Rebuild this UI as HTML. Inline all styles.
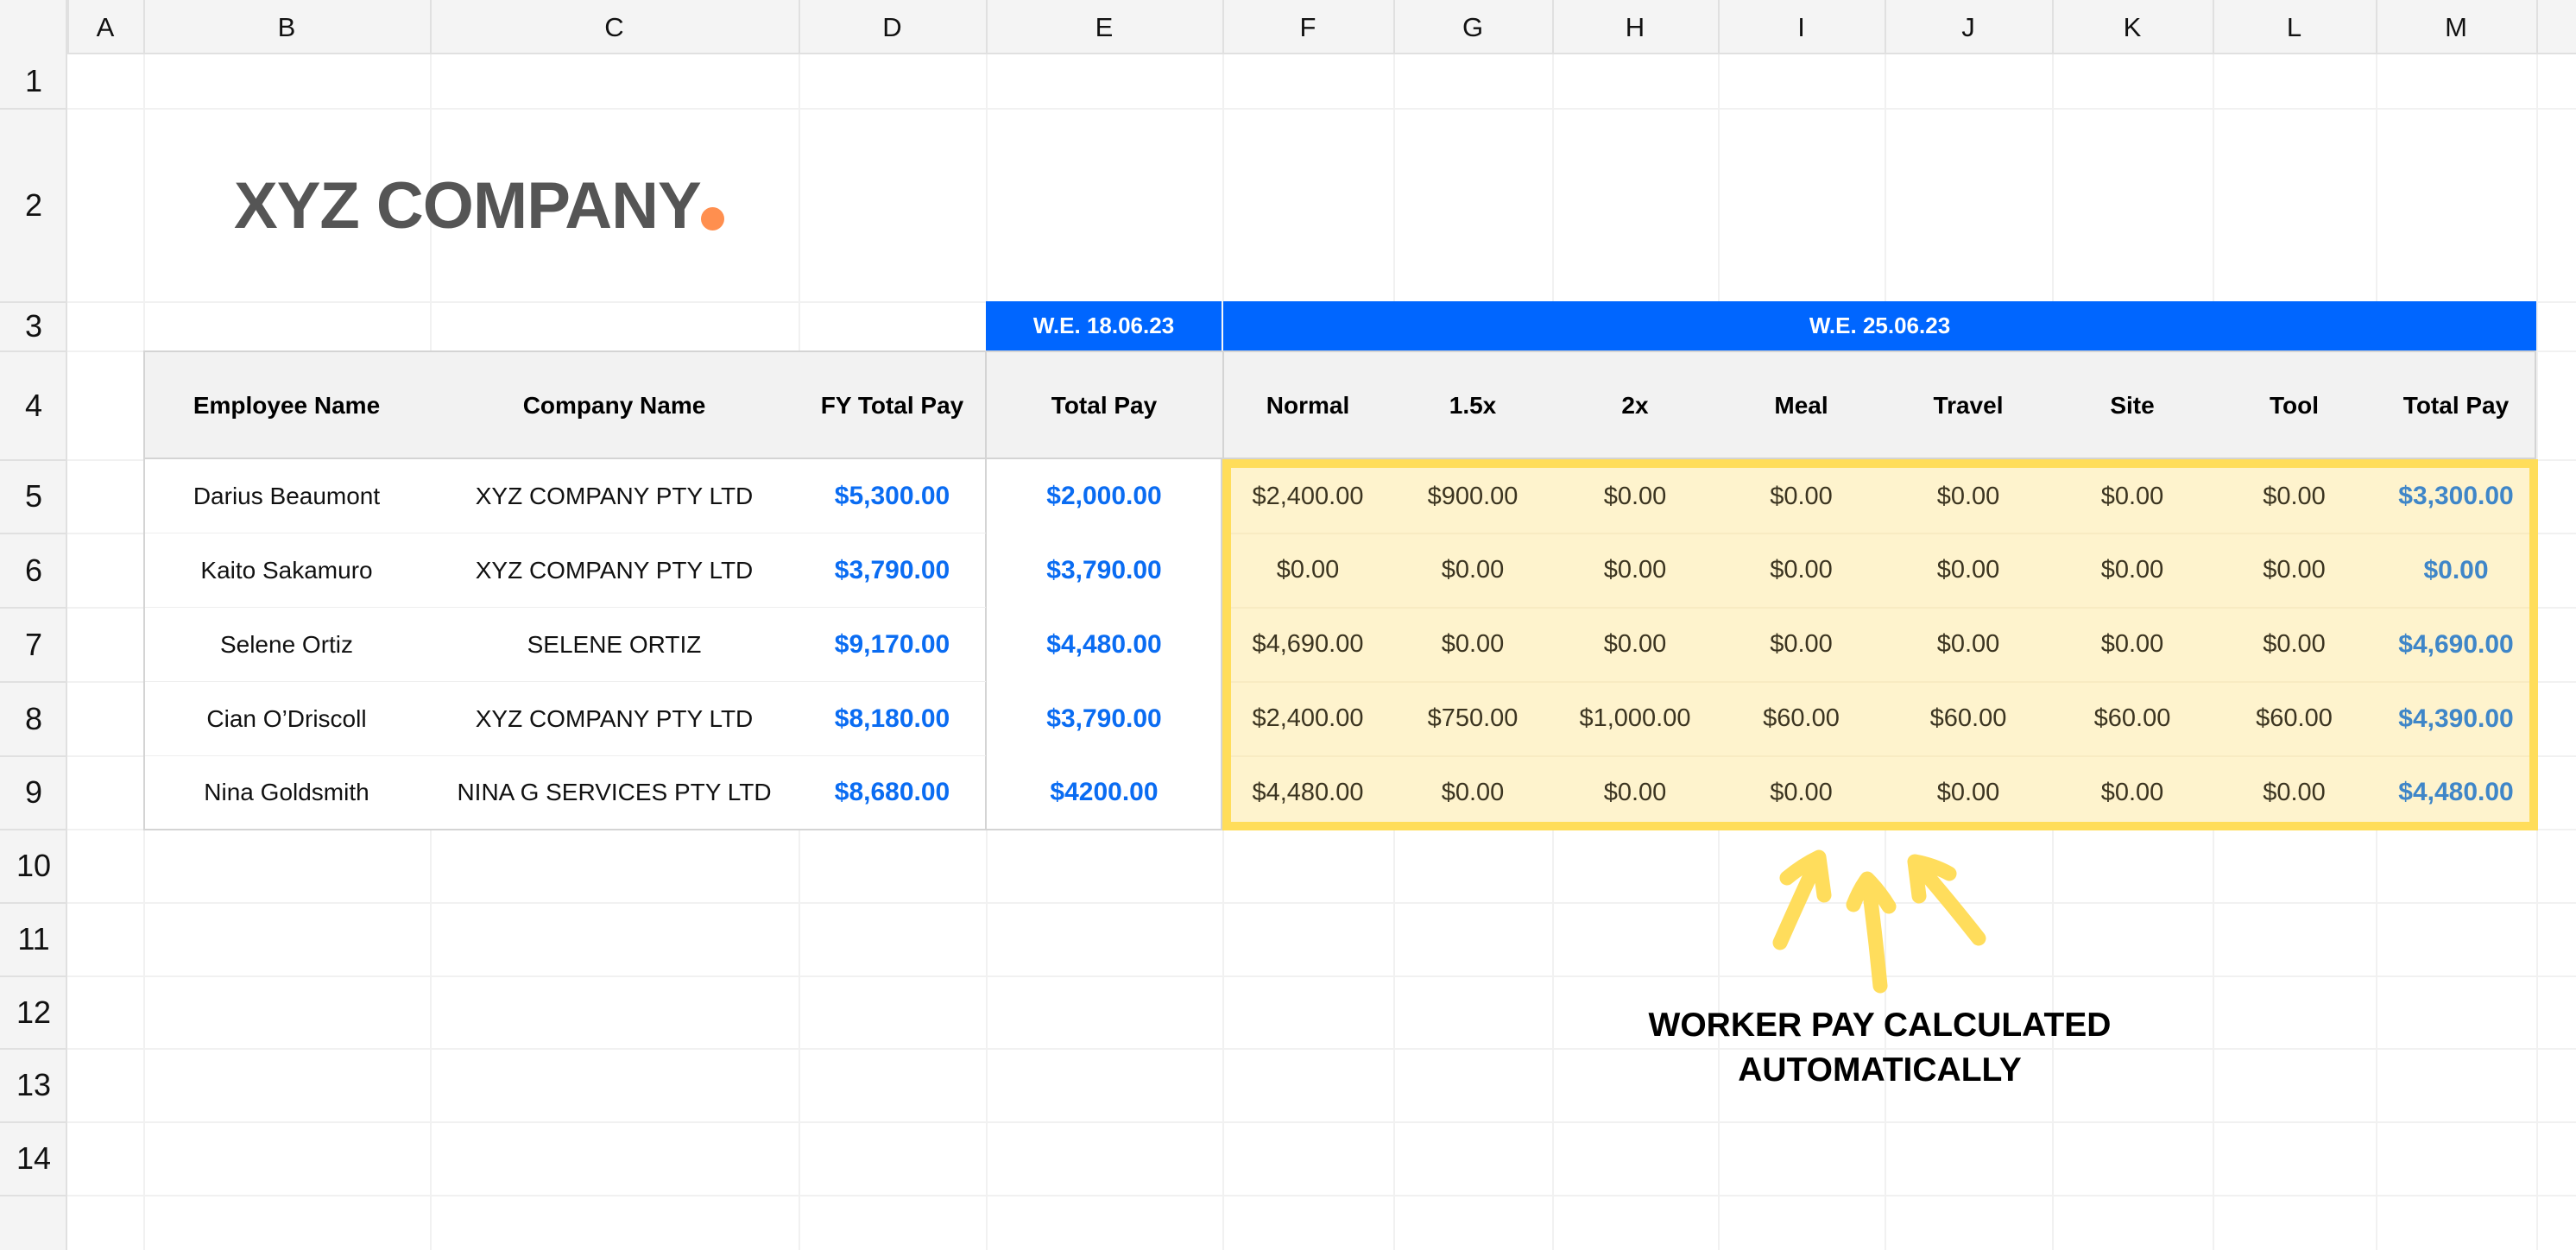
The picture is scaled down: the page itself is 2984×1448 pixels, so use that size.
<!DOCTYPE html>
<html><head><meta charset="utf-8"><style>
*{margin:0;padding:0;box-sizing:border-box}
body{width:2984px;height:1448px;background:#fff;position:relative;overflow:hidden;font-family:"Liberation Sans",sans-serif;color:#111}
.a{position:absolute}
.vl{position:absolute;top:0;height:1448px;width:2px;background:#f1f1f1}
.hl{position:absolute;left:0;width:2984px;height:2px;background:#f1f1f1}
.ch{position:absolute;top:0;height:63px;display:flex;align-items:center;justify-content:center;font-size:31px;color:#111}
.rh{position:absolute;left:0;width:78px;display:flex;align-items:center;justify-content:center;font-size:36px;color:#111}
.c{position:absolute;display:flex;align-items:center;justify-content:center;font-size:28px;white-space:nowrap}
.h{font-weight:bold;font-size:28px;color:#000}
.b{font-weight:bold;font-size:30px;color:#0a6cf2}
.y{color:#3b3420;font-size:29px}
.t{font-weight:bold;font-size:30px;color:#3f86c8}
</style></head><body>
<!-- header strips -->
<div class="a" style="left:0;top:0;width:2984px;height:63px;background:#f4f4f4;border-bottom:2px solid #e0e0e0"></div>
<div class="a" style="left:0;top:0;width:78px;height:1448px;background:#f4f4f4;border-right:2px solid #e0e0e0"></div>
<!-- grid lines -->
<div class="vl" style="left:166px"></div><div class="vl" style="left:498px"></div><div class="vl" style="left:925px"></div><div class="vl" style="left:1142px"></div><div class="vl" style="left:1416px"></div><div class="vl" style="left:1614px"></div><div class="vl" style="left:1798px"></div><div class="vl" style="left:1990px"></div><div class="vl" style="left:2183px"></div><div class="vl" style="left:2377px"></div><div class="vl" style="left:2563px"></div><div class="vl" style="left:2752px"></div><div class="vl" style="left:2938px"></div>
<div class="hl" style="top:125px"></div><div class="hl" style="top:349px"></div><div class="hl" style="top:406px"></div><div class="hl" style="top:532px"></div><div class="hl" style="top:617px"></div><div class="hl" style="top:703px"></div><div class="hl" style="top:789px"></div><div class="hl" style="top:875px"></div><div class="hl" style="top:960px"></div><div class="hl" style="top:1045px"></div><div class="hl" style="top:1130px"></div><div class="hl" style="top:1214px"></div><div class="hl" style="top:1299px"></div><div class="hl" style="top:1384px"></div>
<!-- row header separators -->
<div class="a" style="left:0;top:125px;width:78px;height:2px;background:#e0e0e0"></div><div class="a" style="left:0;top:349px;width:78px;height:2px;background:#e0e0e0"></div><div class="a" style="left:0;top:406px;width:78px;height:2px;background:#e0e0e0"></div><div class="a" style="left:0;top:532px;width:78px;height:2px;background:#e0e0e0"></div><div class="a" style="left:0;top:617px;width:78px;height:2px;background:#e0e0e0"></div><div class="a" style="left:0;top:703px;width:78px;height:2px;background:#e0e0e0"></div><div class="a" style="left:0;top:789px;width:78px;height:2px;background:#e0e0e0"></div><div class="a" style="left:0;top:875px;width:78px;height:2px;background:#e0e0e0"></div><div class="a" style="left:0;top:960px;width:78px;height:2px;background:#e0e0e0"></div><div class="a" style="left:0;top:1045px;width:78px;height:2px;background:#e0e0e0"></div><div class="a" style="left:0;top:1130px;width:78px;height:2px;background:#e0e0e0"></div><div class="a" style="left:0;top:1214px;width:78px;height:2px;background:#e0e0e0"></div><div class="a" style="left:0;top:1299px;width:78px;height:2px;background:#e0e0e0"></div><div class="a" style="left:0;top:1384px;width:78px;height:2px;background:#e0e0e0"></div>
<!-- column header separators -->
<div class="a" style="top:0;height:63px;left:78px;width:2px;background:#e0e0e0"></div><div class="a" style="top:0;height:63px;left:166px;width:2px;background:#e0e0e0"></div><div class="a" style="top:0;height:63px;left:498px;width:2px;background:#e0e0e0"></div><div class="a" style="top:0;height:63px;left:925px;width:2px;background:#e0e0e0"></div><div class="a" style="top:0;height:63px;left:1142px;width:2px;background:#e0e0e0"></div><div class="a" style="top:0;height:63px;left:1416px;width:2px;background:#e0e0e0"></div><div class="a" style="top:0;height:63px;left:1614px;width:2px;background:#e0e0e0"></div><div class="a" style="top:0;height:63px;left:1798px;width:2px;background:#e0e0e0"></div><div class="a" style="top:0;height:63px;left:1990px;width:2px;background:#e0e0e0"></div><div class="a" style="top:0;height:63px;left:2183px;width:2px;background:#e0e0e0"></div><div class="a" style="top:0;height:63px;left:2377px;width:2px;background:#e0e0e0"></div><div class="a" style="top:0;height:63px;left:2563px;width:2px;background:#e0e0e0"></div><div class="a" style="top:0;height:63px;left:2752px;width:2px;background:#e0e0e0"></div><div class="a" style="top:0;height:63px;left:2938px;width:2px;background:#e0e0e0"></div>
<!-- column letters -->
<div class="ch" style="left:78px;width:88px">A</div><div class="ch" style="left:166px;width:332px">B</div><div class="ch" style="left:498px;width:427px">C</div><div class="ch" style="left:925px;width:217px">D</div><div class="ch" style="left:1142px;width:274px">E</div><div class="ch" style="left:1416px;width:198px">F</div><div class="ch" style="left:1614px;width:184px">G</div><div class="ch" style="left:1798px;width:192px">H</div><div class="ch" style="left:1990px;width:193px">I</div><div class="ch" style="left:2183px;width:194px">J</div><div class="ch" style="left:2377px;width:186px">K</div><div class="ch" style="left:2563px;width:189px">L</div><div class="ch" style="left:2752px;width:186px">M</div>
<!-- row numbers -->
<div class="rh" style="top:63px;height:62px">1</div><div class="rh" style="top:126px;height:223px">2</div><div class="rh" style="top:350px;height:56px">3</div><div class="rh" style="top:407px;height:125px">4</div><div class="rh" style="top:533px;height:84px">5</div><div class="rh" style="top:618px;height:85px">6</div><div class="rh" style="top:704px;height:85px">7</div><div class="rh" style="top:790px;height:85px">8</div><div class="rh" style="top:876px;height:84px">9</div><div class="rh" style="top:961px;height:84px">10</div><div class="rh" style="top:1046px;height:84px">11</div><div class="rh" style="top:1131px;height:83px">12</div><div class="rh" style="top:1215px;height:84px">13</div><div class="rh" style="top:1300px;height:84px">14</div>
<!-- logo -->
<div class="a" style="left:271px;top:196px;font-size:76px;font-weight:900;color:#555;letter-spacing:-1px;line-height:86px;white-space:nowrap">XYZ COMPANY</div>
<div class="a" style="left:812px;top:240px;width:27px;height:27px;border-radius:50%;background:#ff8f4f"></div>
<!-- blue headers -->
<div class="c" style="left:1142px;top:349px;width:273px;height:57px;background:#0066ff;color:#fff;font-weight:bold;font-size:26px">W.E. 18.06.23</div>
<div class="c" style="left:1417px;top:349px;width:1521px;height:57px;background:#0066ff;color:#fff;font-weight:bold;font-size:26px">W.E. 25.06.23</div>
<!-- table body bg -->
<div class="a" style="left:166px;top:406px;width:2772px;height:126px;background:#f2f2f2;border:2px solid #d4d4d4"></div>
<div class="a" style="left:166px;top:532px;width:1250px;height:430px;background:#fff;border:2px solid #d4d4d4;border-top:none"></div>
<div class="a" style="left:1141px;top:406px;width:2px;height:556px;background:#d4d4d4"></div>
<div class="a" style="left:1416px;top:406px;width:2px;height:126px;background:#d4d4d4"></div>
<div class="a" style="left:168px;top:617px;width:974px;height:1px;background:#eee"></div><div class="a" style="left:168px;top:703px;width:974px;height:1px;background:#eee"></div><div class="a" style="left:168px;top:789px;width:974px;height:1px;background:#eee"></div><div class="a" style="left:168px;top:875px;width:974px;height:1px;background:#eee"></div>
<div class="a" style="left:1416px;top:532px;width:1524px;height:430px;background:#fef3cd;border:10px solid #ffdd5a"></div>
<div class="a" style="left:1426px;top:617px;width:1504px;height:2px;background:#f8ebc2"></div><div class="a" style="left:1426px;top:703px;width:1504px;height:2px;background:#f8ebc2"></div><div class="a" style="left:1426px;top:789px;width:1504px;height:2px;background:#f8ebc2"></div><div class="a" style="left:1426px;top:875px;width:1504px;height:2px;background:#f8ebc2"></div>
<!-- header row texts -->
<div class="c h" style="left:166px;top:407px;width:332px;height:125px">Employee Name</div>
<div class="c h" style="left:498px;top:407px;width:427px;height:125px">Company Name</div>
<div class="c h" style="left:925px;top:407px;width:217px;height:125px">FY Total Pay</div>
<div class="c h" style="left:1142px;top:407px;width:274px;height:125px">Total Pay</div>
<div class="c h" style="left:1416px;top:407px;width:198px;height:125px">Normal</div>
<div class="c h" style="left:1614px;top:407px;width:184px;height:125px">1.5x</div>
<div class="c h" style="left:1798px;top:407px;width:192px;height:125px">2x</div>
<div class="c h" style="left:1990px;top:407px;width:193px;height:125px">Meal</div>
<div class="c h" style="left:2183px;top:407px;width:194px;height:125px">Travel</div>
<div class="c h" style="left:2377px;top:407px;width:186px;height:125px">Site</div>
<div class="c h" style="left:2563px;top:407px;width:189px;height:125px">Tool</div>
<div class="c h" style="left:2752px;top:407px;width:186px;height:125px">Total Pay</div>
<!-- row 5 -->
<div class="c" style="left:166px;top:533px;width:332px;height:84px">Darius Beaumont</div>
<div class="c" style="left:498px;top:533px;width:427px;height:84px">XYZ COMPANY PTY LTD</div>
<div class="c b" style="left:925px;top:533px;width:217px;height:84px">$5,300.00</div>
<div class="c b" style="left:1142px;top:533px;width:274px;height:84px">$2,000.00</div>
<div class="c y" style="left:1416px;top:533px;width:198px;height:84px">$2,400.00</div>
<div class="c y" style="left:1614px;top:533px;width:184px;height:84px">$900.00</div>
<div class="c y" style="left:1798px;top:533px;width:192px;height:84px">$0.00</div>
<div class="c y" style="left:1990px;top:533px;width:193px;height:84px">$0.00</div>
<div class="c y" style="left:2183px;top:533px;width:194px;height:84px">$0.00</div>
<div class="c y" style="left:2377px;top:533px;width:186px;height:84px">$0.00</div>
<div class="c y" style="left:2563px;top:533px;width:189px;height:84px">$0.00</div>
<div class="c t" style="left:2752px;top:533px;width:186px;height:84px">$3,300.00</div>
<!-- row 6 -->
<div class="c" style="left:166px;top:618px;width:332px;height:85px">Kaito Sakamuro</div>
<div class="c" style="left:498px;top:618px;width:427px;height:85px">XYZ COMPANY PTY LTD</div>
<div class="c b" style="left:925px;top:618px;width:217px;height:85px">$3,790.00</div>
<div class="c b" style="left:1142px;top:618px;width:274px;height:85px">$3,790.00</div>
<div class="c y" style="left:1416px;top:618px;width:198px;height:85px">$0.00</div>
<div class="c y" style="left:1614px;top:618px;width:184px;height:85px">$0.00</div>
<div class="c y" style="left:1798px;top:618px;width:192px;height:85px">$0.00</div>
<div class="c y" style="left:1990px;top:618px;width:193px;height:85px">$0.00</div>
<div class="c y" style="left:2183px;top:618px;width:194px;height:85px">$0.00</div>
<div class="c y" style="left:2377px;top:618px;width:186px;height:85px">$0.00</div>
<div class="c y" style="left:2563px;top:618px;width:189px;height:85px">$0.00</div>
<div class="c t" style="left:2752px;top:618px;width:186px;height:85px">$0.00</div>
<!-- row 7 -->
<div class="c" style="left:166px;top:704px;width:332px;height:85px">Selene Ortiz</div>
<div class="c" style="left:498px;top:704px;width:427px;height:85px">SELENE ORTIZ</div>
<div class="c b" style="left:925px;top:704px;width:217px;height:85px">$9,170.00</div>
<div class="c b" style="left:1142px;top:704px;width:274px;height:85px">$4,480.00</div>
<div class="c y" style="left:1416px;top:704px;width:198px;height:85px">$4,690.00</div>
<div class="c y" style="left:1614px;top:704px;width:184px;height:85px">$0.00</div>
<div class="c y" style="left:1798px;top:704px;width:192px;height:85px">$0.00</div>
<div class="c y" style="left:1990px;top:704px;width:193px;height:85px">$0.00</div>
<div class="c y" style="left:2183px;top:704px;width:194px;height:85px">$0.00</div>
<div class="c y" style="left:2377px;top:704px;width:186px;height:85px">$0.00</div>
<div class="c y" style="left:2563px;top:704px;width:189px;height:85px">$0.00</div>
<div class="c t" style="left:2752px;top:704px;width:186px;height:85px">$4,690.00</div>
<!-- row 8 -->
<div class="c" style="left:166px;top:790px;width:332px;height:85px">Cian O’Driscoll</div>
<div class="c" style="left:498px;top:790px;width:427px;height:85px">XYZ COMPANY PTY LTD</div>
<div class="c b" style="left:925px;top:790px;width:217px;height:85px">$8,180.00</div>
<div class="c b" style="left:1142px;top:790px;width:274px;height:85px">$3,790.00</div>
<div class="c y" style="left:1416px;top:790px;width:198px;height:85px">$2,400.00</div>
<div class="c y" style="left:1614px;top:790px;width:184px;height:85px">$750.00</div>
<div class="c y" style="left:1798px;top:790px;width:192px;height:85px">$1,000.00</div>
<div class="c y" style="left:1990px;top:790px;width:193px;height:85px">$60.00</div>
<div class="c y" style="left:2183px;top:790px;width:194px;height:85px">$60.00</div>
<div class="c y" style="left:2377px;top:790px;width:186px;height:85px">$60.00</div>
<div class="c y" style="left:2563px;top:790px;width:189px;height:85px">$60.00</div>
<div class="c t" style="left:2752px;top:790px;width:186px;height:85px">$4,390.00</div>
<!-- row 9 -->
<div class="c" style="left:166px;top:876px;width:332px;height:84px">Nina Goldsmith</div>
<div class="c" style="left:498px;top:876px;width:427px;height:84px">NINA G SERVICES PTY LTD</div>
<div class="c b" style="left:925px;top:876px;width:217px;height:84px">$8,680.00</div>
<div class="c b" style="left:1142px;top:876px;width:274px;height:84px">$4200.00</div>
<div class="c y" style="left:1416px;top:876px;width:198px;height:84px">$4,480.00</div>
<div class="c y" style="left:1614px;top:876px;width:184px;height:84px">$0.00</div>
<div class="c y" style="left:1798px;top:876px;width:192px;height:84px">$0.00</div>
<div class="c y" style="left:1990px;top:876px;width:193px;height:84px">$0.00</div>
<div class="c y" style="left:2183px;top:876px;width:194px;height:84px">$0.00</div>
<div class="c y" style="left:2377px;top:876px;width:186px;height:84px">$0.00</div>
<div class="c y" style="left:2563px;top:876px;width:189px;height:84px">$0.00</div>
<div class="c t" style="left:2752px;top:876px;width:186px;height:84px">$4,480.00</div>
<!-- arrows -->
<svg class="a" style="left:0;top:0" width="2984" height="1448" viewBox="0 0 2984 1448">
<g fill="none" stroke="#ffdd5c" stroke-width="17" stroke-linecap="round" stroke-linejoin="round">
<path d="M2062 1092 Q2085 1040 2106 995"/><path d="M2070 1017 Q2088 1002 2107 993 L2113 1037"/>
<path d="M2178 1142 Q2172 1080 2164 1020"/><path d="M2147 1048 Q2154 1030 2163 1018 Q2177 1032 2188 1050"/>
<path d="M2292 1087 Q2255 1040 2220 1000"/><path d="M2223 1038 L2218 998 Q2240 1002 2258 1012"/>
</g></svg>
<div class="a" style="left:1800px;top:1162px;width:755px;text-align:center;font-size:39px;font-weight:900;line-height:52px;color:#000">WORKER PAY CALCULATED<br>AUTOMATICALLY</div>
</body></html>
